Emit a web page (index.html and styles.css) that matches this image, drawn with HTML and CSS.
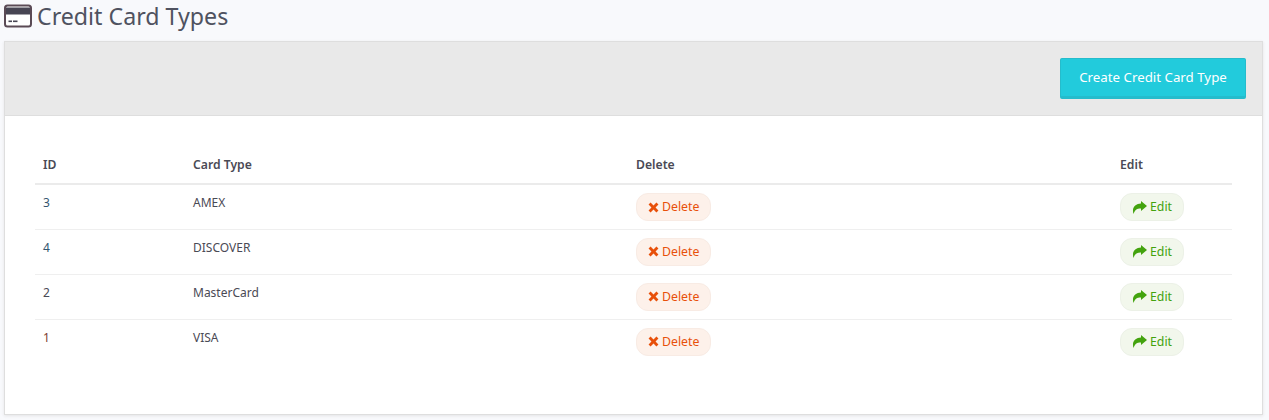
FILE: index.html
```html
<!DOCTYPE html>
<html lang="en">
<head>
    <meta charset="UTF-8">
    <title>Credit Card Types</title>
    <link rel="stylesheet" href="styles.css">
</head>
<body>
    <svg class="icon-defs" width="0" height="0">
        <symbol id="icon-x" viewBox="0 0 12 12">
            <path d="M2.800 0.600L6 3.800 9.200 0.600 11.400 2.800 8.200 6 11.400 9.200 9.200 11.400 6 8.200 2.800 11.400 0.600 9.200 3.800 6 0.600 2.800z"/>
        </symbol>
        <symbol id="icon-share" viewBox="0 0 15 13">
            <path d="M9 0L15 5 9 10V7.400C5.500 7.300 3.200 8 1.500 13 -0.500 6.500 3.500 2.800 9 2.600z"/>
        </symbol>
    </svg>
    <h2 class="page-title">
        <svg class="title-icon" viewBox="0 0 28 24" width="28" height="24">
            <rect x="1" y="1.500" width="26" height="21" rx="2.500" fill="#fff" stroke="#5a4a55" stroke-width="2"/>
            <rect x="2" y="3.500" width="24" height="7" fill="#474553"/>
            <rect x="4.500" y="16.500" width="3.500" height="1.600" fill="#474553"/>
            <rect x="9" y="16.500" width="4.500" height="1.600" fill="#474553"/>
        </svg>
        <span class="title-text">Credit Card Types</span>
    </h2>
    <div class="panel">
        <div class="panel-head">
            <button class="create-btn">Create Credit Card Type</button>
        </div>
        <div class="panel-body">
            <table class="card-table">
                <thead>
                    <tr>
                        <th class="col-id">ID</th>
                        <th class="col-type">Card Type</th>
                        <th class="col-delete">Delete</th>
                        <th>Edit</th>
                    </tr>
                </thead>
                <tbody>
                    <tr>
                        <td class="id-blue">3</td>
                        <td>AMEX</td>
                        <td class="action"><a class="pill pill-delete"><svg class="icon-del"><use href="#icon-x"/></svg>Delete</a></td>
                        <td class="action"><a class="pill pill-edit"><svg class="icon-edit"><use href="#icon-share"/></svg>Edit</a></td>
                    </tr>
                    <tr>
                        <td class="id-blue">4</td>
                        <td>DISCOVER</td>
                        <td class="action"><a class="pill pill-delete"><svg class="icon-del"><use href="#icon-x"/></svg>Delete</a></td>
                        <td class="action"><a class="pill pill-edit"><svg class="icon-edit"><use href="#icon-share"/></svg>Edit</a></td>
                    </tr>
                    <tr>
                        <td>2</td>
                        <td>MasterCard</td>
                        <td class="action"><a class="pill pill-delete"><svg class="icon-del"><use href="#icon-x"/></svg>Delete</a></td>
                        <td class="action"><a class="pill pill-edit"><svg class="icon-edit"><use href="#icon-share"/></svg>Edit</a></td>
                    </tr>
                    <tr>
                        <td class="id-red">1</td>
                        <td>VISA</td>
                        <td class="action"><a class="pill pill-delete"><svg class="icon-del"><use href="#icon-x"/></svg>Delete</a></td>
                        <td class="action"><a class="pill pill-edit"><svg class="icon-edit"><use href="#icon-share"/></svg>Edit</a></td>
                    </tr>
                </tbody>
            </table>
        </div>
    </div>
</body>
</html>
```

FILE: styles.css
```css
body {
    margin: 0;
    padding: 0 6px 0 4px;
    height: 420px;
    box-sizing: border-box;
    overflow: hidden;
    background: #f8f9fc;
    font-family: "Noto Sans", "Open Sans", sans-serif;
    font-size: 12px;
    color: #4a4a55;
}
.icon-defs {
    position: absolute;
}
.page-title {
    display: flex;
    align-items: center;
    gap: 5px;
    height: 33px;
    margin: 0 0 8px 0;
    font-size: 23.200px;
    font-weight: 400;
    color: #4f5260;
}
.title-icon {
    flex: none;
    margin-top: -1px;
}
.title-text {
    margin-top: -2px;
}
.panel {
    height: 374px;
    box-sizing: border-box;
    border: 1px solid #dedede;
    background: #fff;
    box-shadow: 0 1px 3px #e4e4e6;
}
.panel-head {
    display: flex;
    justify-content: flex-end;
    align-items: flex-start;
    height: 74px;
    box-sizing: border-box;
    padding: 16px 16px 0 0;
    background: #e9e9e9;
    border-bottom: 1px solid #dedede;
}
.create-btn {
    width: 186px;
    height: 41px;
    padding: 0 0 2px 0;
    border: 1px solid #25bccc;
    border-bottom-width: 3px;
    border-radius: 2px;
    background: #22cbdc;
    color: #fff;
    font-family: inherit;
    font-size: 13.300px;
}
.panel-body {
    padding: 29px 30px 0 30px;
}
.card-table {
    width: 100%;
    border-collapse: collapse;
    table-layout: fixed;
}
.card-table th {
    height: 39px;
    padding: 0 8px;
    box-sizing: border-box;
    text-align: left;
    font-size: 12.200px;
    font-weight: 600;
    border-bottom: 2px solid #ebebeb;
}
.card-table td {
    height: 45px;
    padding: 10px 8px 0 8px;
    box-sizing: border-box;
    line-height: 16px;
    vertical-align: top;
    border-bottom: 1px solid #efefef;
}
.card-table td.action {
    padding-top: 8px;
}
.card-table tr:last-child td {
    border-bottom: 0;
}
.col-id {
    width: 150px;
}
.col-type {
    width: 443px;
}
.col-delete {
    width: 484px;
}
.id-blue {
    color: #34566f;
}
.id-red {
    color: #7d4033;
}
.pill {
    display: flex;
    align-items: center;
    gap: 3px;
    width: max-content;
    height: 28px;
    box-sizing: border-box;
    padding: 0 11px;
    border-radius: 12px;
    font-size: 12.300px;
}
.pill-delete {
    border: 1px solid #f8ebe4;
    background: #fdf1ea;
    color: #e8500a;
}
.pill-edit {
    border: 1px solid #ecf1e7;
    background: #f2f7ec;
    color: #43a30e;
}
.icon-del {
    width: 11px;
    height: 11px;
    fill: #e8500a;
}
.icon-edit {
    width: 15px;
    height: 13px;
    fill: #43a30e;
}
```
